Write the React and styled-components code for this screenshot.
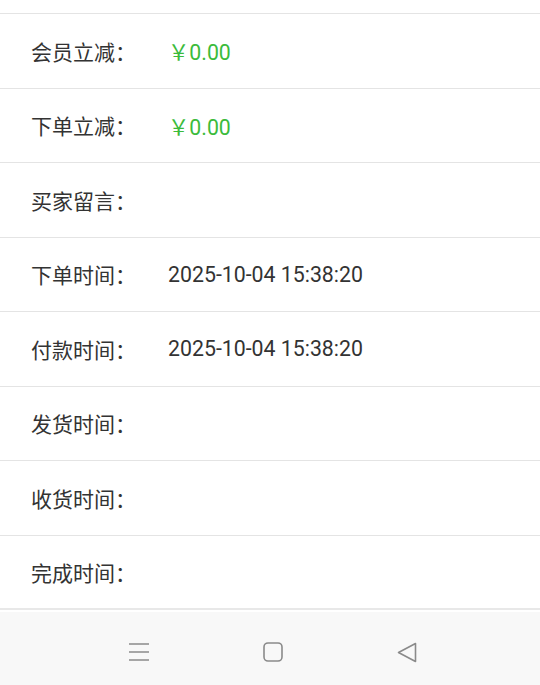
import React from "react";
import styled, { createGlobalStyle } from "styled-components";

const rows = [
  { label: "会员立减：", value: "￥0.00", green: true },
  { label: "下单立减：", value: "￥0.00", green: true },
  { label: "买家留言：", value: "" },
  { label: "下单时间：", value: "2025-10-04 15:38:20" },
  { label: "付款时间：", value: "2025-10-04 15:38:20" },
  { label: "发货时间：", value: "" },
  { label: "收货时间：", value: "" },
  { label: "完成时间：", value: "" },
];

export default function App() {
  return (
    <>
      <GlobalStyle />
      <Page>
        <List>
          <TopEdge />
          {rows.map((r, i) => (
            <Row key={i}>
              <Label>{r.label}</Label>
              <Value $green={r.green}>{r.value}</Value>
            </Row>
          ))}
        </List>
        <NavBar>
          <NavButton>
            <svg width="22" height="20" viewBox="0 0 22 20" fill="none" stroke="#8a8a8a" strokeWidth="1.6">
              <path d="M1 2h20M1 10h20M1 18h20" />
            </svg>
          </NavButton>
          <NavButton>
            <svg width="20" height="20" viewBox="0 0 20 20" fill="none" stroke="#8a8a8a" strokeWidth="1.6">
              <rect x="1" y="1" width="18" height="18" rx="4" />
            </svg>
          </NavButton>
          <NavButton>
            <svg width="20" height="21" viewBox="0 0 20 21" fill="none" stroke="#8a8a8a" strokeWidth="1.6" strokeLinejoin="round">
              <path d="M18.5 1.5L1.5 10.5L18.5 19.5Z" />
            </svg>
          </NavButton>
        </NavBar>
      </Page>
    </>
  );
}

const GlobalStyle = createGlobalStyle`
  html, body {
    margin: 0;
    padding: 0;
    background: #fff;
  }
  body {
    font-family: Roboto, "Noto Sans CJK SC", sans-serif;
  }
`;

const Page = styled.div`
  width: 540px;
  height: 685px;
  display: flex;
  flex-direction: column;
  overflow: hidden;
`;

const List = styled.div`
  flex: 1;
  display: flex;
  flex-direction: column;
  background: #fff;
`;

const TopEdge = styled.div`
  height: 14px;
  box-sizing: border-box;
  border-bottom: 1px solid #e4e4e4;
`;

const Row = styled.div`
  height: 74.5px;
  box-sizing: border-box;
  border-bottom: 1px solid #e4e4e4;
  display: flex;
  align-items: center;
  padding-left: 31px;
  font-size: 21px;
  color: #333;

  &:last-child {
    border-bottom: 2px solid #e8e8e8;
  }
`;

const Label = styled.span`
  width: 137px;
  flex-shrink: 0;
  font-family: "Noto Sans CJK SC", sans-serif;
  color: #333;
`;

const Value = styled.span`
  font-family: Roboto, "Noto Sans CJK SC", sans-serif;
  font-size: 21.3px;
  color: ${(p) => (p.$green ? "#3bbb3b" : "#333")};
`;

const NavBar = styled.div`
  height: 73px;
  flex-shrink: 0;
  box-sizing: border-box;
  background: #f8f8f8;
  display: grid;
  grid-template-columns: repeat(3, 134px);
  align-items: center;
  padding: 7px 0 0 72px;
`;

const NavButton = styled.div`
  display: flex;
  justify-content: center;
  align-items: center;
`;
